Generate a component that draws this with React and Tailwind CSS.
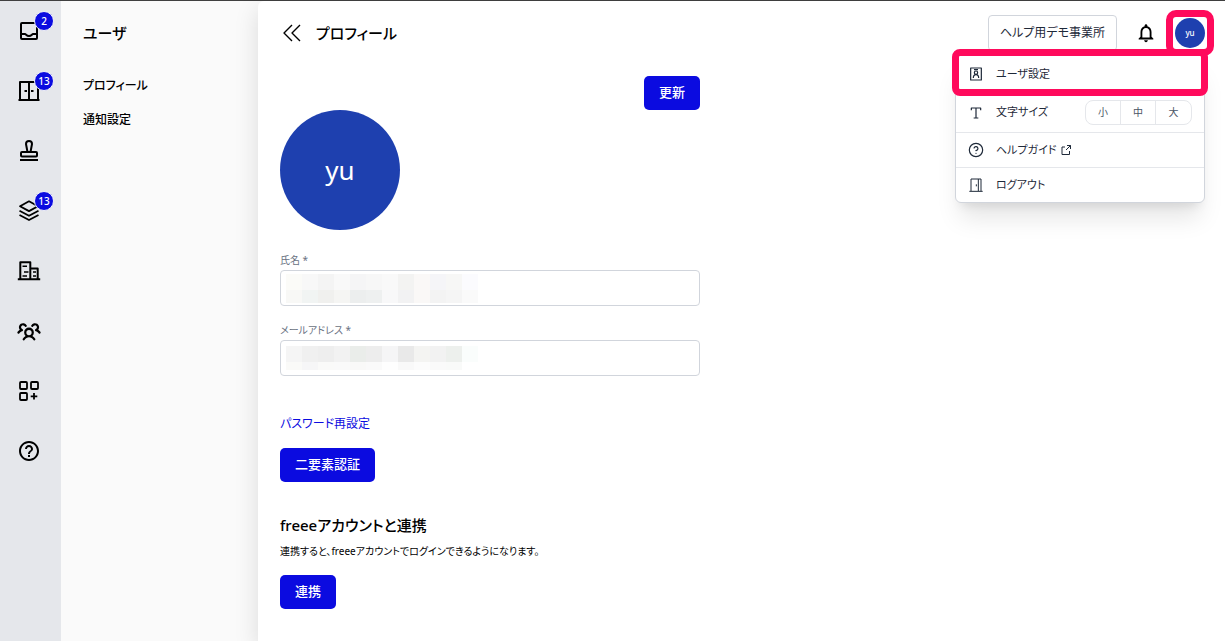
import { useState } from "react";
import { MdHelpOutline, MdNotificationsNone } from "react-icons/md";
import { PiUsersThreeBold } from "react-icons/pi";
import { CircleHelp } from "lucide-react";

const Icon = ({ children, size = 24, width = 2 }) => (
  <svg
    width={size}
    height={size}
    viewBox="0 0 24 24"
    fill="none"
    stroke="currentColor"
    strokeWidth={width}
    strokeLinejoin="round"
    aria-hidden="true"
  >
    {children}
  </svg>
);

const InboxIcon = () => (
  <Icon>
    <rect x="4" y="4" width="16" height="16" rx="1" />
    <path d="M4 15h4c1 0 1.500 2 4 2s3-2 4-2h4" />
  </Icon>
);

const CabinetIcon = () => (
  <Icon>
    <path d="M3 21V3h18v18M12 3v18M1.500 21h21M7.500 12h2.500M14 12h2.500" />
  </Icon>
);

const StampIcon = () => (
  <Icon>
    <path d="M10.500 13 9 5a3 3 0 0 1 6 0L13.500 13" />
    <rect x="4" y="13" width="16" height="4.500" rx="1" />
    <path d="M3 21h18" />
  </Icon>
);

const LayersIcon = () => (
  <Icon width={1.8}>
    <path d="M3 7.200 12 2.300l9 4.900-9 4.900z" />
    <path d="m2.500 11.800 9.500 5 9.500-5M2.500 16l9.500 5 9.500-5" />
  </Icon>
);

const BuildingIcon = () => (
  <Icon>
    <path d="M3.300 20V3.300h10V20M13.300 9.500h7.400V20M.8 20.300h22.400" />
    <path d="M5.500 7.200h4.500M7 13h4.500M5.500 17h4.500M16 13h3M16 17h3" strokeWidth="1.600" />
  </Icon>
);

const AppsIcon = () => (
  <Icon width={1.8}>
    <rect x="3" y="3" width="7" height="7" rx="1" />
    <rect x="14" y="3" width="7" height="7" rx="1" />
    <rect x="3" y="14" width="7" height="7" rx="1" />
    <path d="M17 14v6.500M13.700 17.300h6.600" />
  </Icon>
);

const BadgeIcon = () => (
  <Icon size={16} width={1.8}>
    <rect x="4" y="3" width="16" height="18" />
    <circle cx="12" cy="10" r="2.500" />
    <path d="M8 18c0-3.500 2-5 4-5s4 1.500 4 5M9 5.500h6" />
  </Icon>
);

const TextSizeIcon = () => (
  <Icon size={16} width={1.8}>
    <path d="M5 8V4.500h14V8M12 4.500v15M8.500 19.500h7" />
  </Icon>
);

const ExternalIcon = () => (
  <Icon size={12}>
    <path d="M10 6H4v15h15v-7M14 3h7v7M21 3l-9 9" />
  </Icon>
);

const DoorIcon = () => (
  <Icon size={16} width={1.5}>
    <path d="M4.500 21V3h15v18M15.500 3v18M2 21.500h20M12.500 11v3" />
  </Icon>
);

const BackIcon = () => (
  <Icon size={24} width={1.4}>
    <path d="m12 4-8 8 8 8M20 4l-8 8 8 8" />
  </Icon>
);

const navItems = [
  { label: "受信箱", icon: <InboxIcon />, count: 2 },
  { label: "キャビネット", icon: <CabinetIcon />, count: 13 },
  { label: "承認", icon: <StampIcon /> },
  { label: "一括", icon: <LayersIcon />, count: 13 },
  { label: "事業所", icon: <BuildingIcon /> },
  { label: "メンバー", icon: <PiUsersThreeBold size={24} /> },
  { label: "アプリ", icon: <AppsIcon /> },
  { label: "ヘルプ", icon: <MdHelpOutline size={24} /> },
];

const nameMask = [
  "bg-[#fbfbf8]", "bg-[#f8f8f8]", "bg-[#f4f4f4]", "bg-[#f9f9f9]", "bg-[#f5f5f6]", "bg-[#f7f7f7]",
  "bg-[#f9f9f9]", "bg-[#f3f3f2]", "bg-[#faf8f7]", "bg-[#f5f5f8]", "bg-[#f7f7f6]", "bg-[#fbfbfe]",
  "bg-[#f8f8f6]", "bg-[#f1f4f3]", "bg-[#f0f0ee]", "bg-[#f5f5f3]", "bg-[#eceeee]", "bg-[#eef0f0]",
  "bg-[#f8f8f9]", "bg-[#f2f2f3]", "bg-[#faf8f7]", "bg-[#f3f3f3]", "bg-[#f5f5f5]", "bg-[#fafafa]",
];

const mailMask = [
  "bg-[#f5f5f5]", "bg-[#f0f0f0]", "bg-[#eeeeee]", "bg-[#f2f2f2]", "bg-[#eaedea]", "bg-[#ededed]",
  "bg-[#f5f5f6]", "bg-[#e9e9e9]", "bg-[#f4f4f2]", "bg-[#f2f2f2]", "bg-[#edf0ed]", "bg-[#fafdfc]",
  "bg-[#fafaf8]", "bg-[#f6f6f7]", "bg-[#fafaf9]", "bg-[#fafafa]", "bg-[#f9f9f8]", "bg-[#fafafa]",
  "bg-[#fefefe]", "bg-[#f9f9f9]", "bg-[#fcfcfc]", "bg-[#fafafa]", "bg-[#f9faf9]", "bg-white",
];

const Mask = ({ cells, className }) => (
  <div className={`absolute left-1.5 grid w-48 grid-cols-12 ${className}`} aria-hidden="true">
    {cells.map((cell, index) => (
      <span key={index} className={cell} />
    ))}
  </div>
);

const Field = ({ id, label, cells, maskClass }) => (
  <div className="mb-3.5">
    <label htmlFor={id} className="block text-[10px] leading-5 text-gray-500">
      {label} *
    </label>
    <div className="relative">
      <input
        id={id}
        type="text"
        className="block h-9 w-full rounded border border-gray-300 bg-white px-2 text-sm"
      />
      <Mask cells={cells} className={maskClass} />
    </div>
  </div>
);

const Button = ({ children }) => (
  <button
    type="button"
    className="h-[34px] rounded-[5px] bg-[#0b0be0] px-[15px] text-[13px] font-medium text-white"
  >
    {children}
  </button>
);

const Sidebar = () => (
  <nav className="w-[61px] shrink-0 bg-gray-200">
    {navItems.map((item) => (
      <button
        key={item.label}
        type="button"
        aria-label={item.label}
        className="flex h-[60px] w-[58px] items-center justify-center"
      >
        <span className="relative">
          {item.icon}
          {item.count && (
            <span className="absolute -top-2 left-[17px] flex h-5 w-5 items-center justify-center rounded-full border border-gray-100 bg-[#0b0be0] text-[10px] font-medium text-white">
              {item.count}
            </span>
          )}
        </span>
      </button>
    ))}
  </nav>
);

const UserMenu = () => {
  const [fontSize, setFontSize] = useState("");

  return (
    <div className="absolute top-9 right-0 w-[250px] rounded-md border border-gray-300 bg-white text-[11px] text-gray-800 shadow-xl">
      <div className="relative flex h-[38px] items-center">
        <a href="#settings" className="flex w-full items-center gap-3 px-3">
          <BadgeIcon />
          ユーザ設定
        </a>
        <span className="pointer-events-none absolute -inset-x-1 -top-1.5 -bottom-[3px] rounded-lg border-[7px] border-[#ff0a5c]" />
      </div>
      <div className="flex h-[39px] items-center gap-3 px-3">
        <TextSizeIcon />
        <span>文字サイズ</span>
        <div className="ml-auto flex divide-x divide-gray-200 rounded-lg border border-gray-200 text-[10px] text-gray-600">
          {["小", "中", "大"].map((size) => (
            <button
              key={size}
              type="button"
              aria-pressed={fontSize === size}
              onClick={() => setFontSize(size)}
              className="h-[23px] w-[35px]"
            >
              {size}
            </button>
          ))}
        </div>
      </div>
      <a href="#help" className="flex h-[35px] items-center gap-3 border-t border-gray-200 px-3">
        <CircleHelp size={16} strokeWidth={1.8} />
        <span className="flex items-center gap-1">
          ヘルプガイド
          <ExternalIcon />
        </span>
      </a>
      <button type="button" className="flex h-[35px] w-full items-center gap-3 border-t border-gray-200 px-3">
        <DoorIcon />
        ログアウト
      </button>
    </div>
  );
};

const Header = () => (
  <header className="flex h-16 items-center justify-between pr-5 pl-[22px]">
    <div className="flex items-center gap-3">
      <button type="button" aria-label="戻る">
        <BackIcon />
      </button>
      <h1 className="text-[15px] font-medium">プロフィール</h1>
    </div>
    <div className="flex items-center">
      <button type="button" className="h-9 rounded border border-gray-300 px-[11px] text-xs text-gray-800">
        ヘルプ用デモ事業所
      </button>
      <button type="button" aria-label="通知" className="mx-[18px]">
        <MdNotificationsNone size={22} />
      </button>
      <div className="relative">
        <button
          type="button"
          aria-label="ユーザメニュー"
          className="block h-[30px] w-[30px] rounded-full bg-[#1e40af] text-[8px] font-medium text-white"
        >
          yu
        </button>
        <span className="pointer-events-none absolute -inset-x-[9px] -top-2 -bottom-2 rounded-[10px] border-[7px] border-[#ff0a5c]" />
        <UserMenu />
      </div>
    </div>
  </header>
);

const App = () => {
  return (
    <div className="flex min-h-screen border-t border-neutral-700 bg-neutral-50 font-['Noto_Sans','Noto_Sans_CJK_JP',sans-serif] text-black [font-feature-settings:'palt']">
      <Sidebar />

      <aside className="w-[197px] shrink-0 pt-[18px] pl-[22px]">
        <h2 className="mb-[22px] text-[15px] leading-7 font-medium">ユーザ</h2>
        <ul className="text-xs leading-[34px] font-medium">
          <li>
            <a href="#profile">プロフィール</a>
          </li>
          <li>
            <a href="#notifications">通知設定</a>
          </li>
        </ul>
      </aside>

      <main className="min-w-0 flex-1 rounded-tl-md bg-white shadow-[0_8px_24px_rgba(0,0,0,0.13)]">
        <Header />
        <div className="max-w-[442px] pt-[11px] pl-[22px]">
          <div className="flex justify-end">
            <Button>更新</Button>
          </div>
          <div className="mb-5 flex h-[120px] w-[120px] items-center justify-center rounded-full bg-[#1e40af] text-[26px] text-white">
            yu
          </div>

          <Field id="name" label="氏名" cells={nameMask} maskClass="top-1 grid-rows-[16px_13px]" />
          <Field id="mail" label="メールアドレス" cells={mailMask} maskClass="top-1.5 grid-rows-[16px_8px]" />

          <a href="#password" className="mt-9 mb-3 block text-xs leading-6 text-[#0b0be0]">
            パスワード再設定
          </a>
          <Button>二要素認証</Button>

          {/* freee account link */}
          <h2 className="mt-[27px] text-[15px] leading-8 font-medium">freeeアカウントと連携</h2>
          <p className="mb-3.5 text-[10px] leading-5">
            連携すると、freeeアカウントでログインできるようになります。
          </p>
          <Button>連携</Button>
        </div>
      </main>
    </div>
  );
};

export default App;
